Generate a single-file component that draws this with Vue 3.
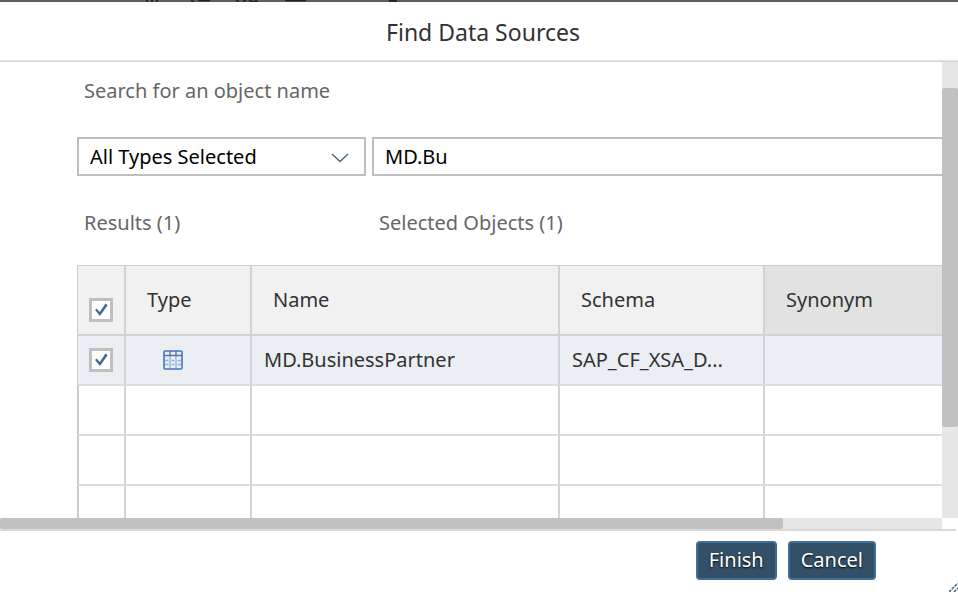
<script setup>
import { ref, computed } from 'vue'

const objectType = ref('all')
const query = ref('MD.Bu')
const rows = ref([{ selected: true, name: 'MD.BusinessPartner', schema: 'SAP_CF_XSA_D...' }])
const emptyRows = 4
const allSelected = computed({
  get: () => rows.value.every((row) => row.selected),
  set: (value) => rows.value.forEach((row) => (row.selected = value)),
})
const selectedCount = computed(() => rows.value.filter((row) => row.selected).length)
</script>

<template>
  <div class="page">
    <div class="backdrop" aria-hidden="true">
      <svg width="400" height="2" viewBox="0 0 400 2">
        <path
          d="M147 0v2M152 0v2M157 0v2M191 0l3 2M236 0l3 2M243 2l3-2M249 0l3 2M256 0v2M389 1h8"
          stroke="#26262c"
          stroke-width="2"
          fill="none"
        />
        <path d="M198 .5h12M252 1.5h6M285 .5h21" stroke="#1b2230" stroke-width="1.5" fill="none" />
      </svg>
    </div>
    <section class="dialog" role="dialog" aria-labelledby="dialog-title">
      <header class="dialog-header">
        <h1 id="dialog-title">Find Data Sources</h1>
      </header>

      <div class="scroller">
        <div class="viewport">
          <div class="content">
            <label class="caption" for="object-name">Search for an object name</label>
            <div class="filters">
              <div class="select-box">
                <select v-model="objectType" aria-label="Object type">
                  <option value="all">All Types Selected</option>
                </select>
                <svg class="chevron" width="18" height="10" viewBox="0 0 18 10">
                  <path d="M1 1l8 7.5L17 1" fill="none" stroke="#41678a" stroke-width="1.4" />
                </svg>
              </div>
              <input id="object-name" v-model="query" class="search" type="text" />
            </div>
            <div class="tabs">
              <span>Results ({{ rows.length }})</span>
              <span>Selected Objects ({{ selectedCount }})</span>
            </div>
            <table>
              <colgroup>
                <col class="col-check" />
                <col class="col-type" />
                <col class="col-name" />
                <col class="col-schema" />
                <col />
              </colgroup>
              <thead>
                <tr>
                  <th class="check">
                    <input v-model="allSelected" type="checkbox" aria-label="Select all" />
                  </th>
                  <th>Type</th>
                  <th>Name</th>
                  <th>Schema</th>
                  <th class="active">Synonym</th>
                </tr>
              </thead>
              <tbody>
                <tr v-for="row in rows" :key="row.name" :class="{ selected: row.selected }">
                  <td class="check">
                    <input v-model="row.selected" type="checkbox" :aria-label="row.name" />
                  </td>
                  <td class="type">
                    <svg width="20" height="20" viewBox="0 0 20 20" fill="none">
                      <path d="M7 6v13M13 6v13" stroke="#9fbce6" stroke-width="1.6" />
                      <path
                        d="M2 10.5h3.500M2 14.500h3.500M8.500 10.500h3M8.500 14.500h3M14.500 10.500H18M14.500 14.500H18"
                        stroke="#8fafdf"
                        stroke-width="1.400"
                      />
                      <rect x="1" y="1" width="18" height="18" rx="1" stroke="#4a74b8" stroke-width="1.6" />
                      <path d="M1 5.500h18M7 1v5M13 1v5" stroke="#4a74b8" stroke-width="1.4" />
                    </svg>
                  </td>
                  <td>{{ row.name }}</td>
                  <td>{{ row.schema }}</td>
                  <td></td>
                </tr>
                <tr v-for="n in emptyRows" :key="n" class="empty">
                  <td v-for="c in 5" :key="c"></td>
                </tr>
              </tbody>
            </table>
          </div>
        </div>
        <div class="track-y"><div class="thumb-y"></div></div>
        <div class="track-x"><div class="thumb-x"></div></div>
      </div>

      <footer class="dialog-footer">
        <button type="button">Finish</button>
        <button type="button">Cancel</button>
      </footer>
      <svg class="grip" width="9" height="9" viewBox="0 0 9 9">
        <path d="M0 9l9-9M5 9l4-4" stroke="#4b6d8c" stroke-width="1.6" stroke-dasharray="3 1" />
      </svg>
    </section>
  </div>
</template>

<style>
body {
  background: #fff;
}
</style>

<style scoped>
.page {
  display: flex;
  flex-direction: column;
  height: 100vh;
  overflow: hidden;
  font-family: 'Noto Sans', 'Open Sans', sans-serif;
  font-size: 20px;
  line-height: 28px;
  color: #333;
}
.page *,
.page {
  box-sizing: border-box;
}
.backdrop {
  flex: none;
  height: 2px;
  background: #5f5d5d;
}
.backdrop svg {
  display: block;
}
.dialog {
  position: relative;
  display: flex;
  flex: 1;
  flex-direction: column;
  min-height: 0;
}
.dialog-header {
  flex: none;
  padding: 16px 0 15px;
  border-bottom: 1px solid #d3d3d3;
  box-shadow: inset 0 -1px #e8e8e8;
}
.dialog-header h1 {
  margin: 0;
  padding-left: 8px;
  font-size: 23px;
  font-weight: 400;
  line-height: 28px;
  text-align: center;
}
.scroller {
  display: grid;
  flex: 1;
  grid-template-columns: minmax(0, 1fr) 16px;
  grid-template-rows: minmax(0, 1fr) 11px;
  min-height: 0;
}
.viewport {
  overflow: hidden;
}
.content {
  width: 120%;
  padding: 15px 14px 0 77px;
}
.caption {
  display: block;
  padding-left: 7px;
  color: #666;
}
.filters {
  display: grid;
  grid-template-columns: 289px 1fr;
  gap: 6px;
  margin-top: 32px;
}
.select-box {
  position: relative;
}
select,
.search {
  display: block;
  width: 100%;
  height: 39px;
  margin: 0;
  padding: 0 11px;
  border: 2px solid #bfbfbf;
  border-radius: 0;
  background: #fff;
  color: #000;
  font: inherit;
  outline: none;
  appearance: none;
}
.chevron {
  position: absolute;
  top: 16px;
  right: 17px;
  pointer-events: none;
}
.tabs {
  display: grid;
  grid-template-columns: 289px 1fr;
  gap: 6px;
  margin-top: 33px;
  padding-left: 7px;
  color: #666;
}
table {
  width: 100%;
  margin-top: 28px;
  border-top: 1px solid #ccc;
  border-left: 1px solid #ccc;
  border-spacing: 0;
  table-layout: fixed;
}
.col-check {
  width: 48px;
}
.col-type {
  width: 126px;
}
.col-name {
  width: 308px;
}
.col-schema {
  width: 205px;
}
th,
td {
  height: 50px;
  padding: 0 12px;
  border-right: 2px solid #d3d3d3;
  border-bottom: 2px solid #dcdcdc;
  overflow: hidden;
  font-weight: 400;
  text-align: left;
  text-overflow: ellipsis;
  white-space: nowrap;
}
th {
  height: 70px;
  padding: 0 21px;
  border-bottom-color: #d3d3d3;
  background: #f1f1f1;
}
th.active {
  background: #e2e2e2;
}
.selected td {
  background: #ebeff4;
}
.empty td:first-child {
  box-shadow: inset 1px 0 #ccc;
}
th.check,
td.check {
  padding: 0 0 0 11px;
}
th.check {
  padding-bottom: 12px;
  vertical-align: bottom;
}
td.type {
  padding-right: 40px;
  padding-left: 37px;
}
td.type svg,
.check input {
  display: block;
}
.check input {
  width: 24px;
  height: 24px;
  margin: 0;
  border: 3px solid #bfbfbf;
  background: #fff;
  appearance: none;
}
.check input:checked::before {
  display: block;
  width: 18px;
  height: 18px;
  background: #3f6b94;
  clip-path: polygon(17% 50%, 26% 42%, 43% 61%, 75% 14%, 87% 24%, 44% 84%);
  content: '';
}
.track-y,
.track-x {
  background: #e7e7e7;
}
.track-y {
  padding-top: 26px;
}
.thumb-y {
  height: 78.8%;
  border-radius: 2px;
  background: #c1c1c1;
}
.thumb-x {
  width: 83.1%;
  height: 100%;
  border-radius: 2px;
  background: #c1c1c1;
}
.dialog-footer {
  display: flex;
  flex: none;
  gap: 11px;
  justify-content: flex-end;
  margin-right: 2px;
  padding: 10px 80px 12px 0;
  border-top: 2px solid #d9d9d9;
}
.dialog-footer button {
  height: 39px;
  padding: 0 11px 2px;
  border: 2px solid #426d94;
  border-radius: 4px;
  background: #325068;
  color: #fff;
  font: inherit;
  text-shadow: 0 1px 2px #000;
}
.grip {
  position: absolute;
  right: 0;
  bottom: 0;
}
</style>
